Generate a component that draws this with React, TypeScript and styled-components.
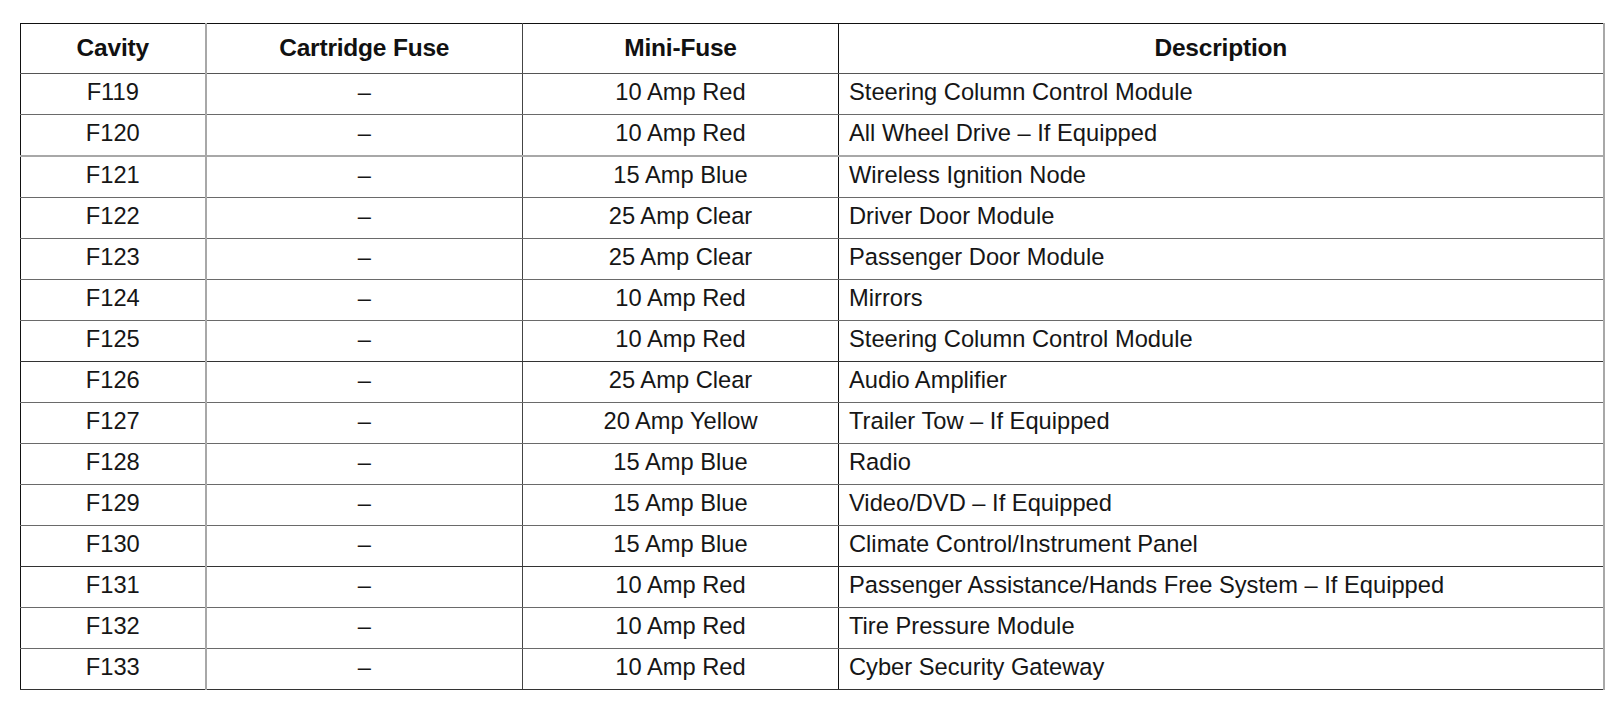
import React from "react";
import styled, { createGlobalStyle } from "styled-components";

const Global = createGlobalStyle`
  html, body { margin: 0; padding: 0; background: #ffffff; }
  body { font-family: "Liberation Sans", Arial, sans-serif; color: #111; }
`;

const Page = styled.div`
  padding: 23px 8px 0 20px;
`;

const Table = styled.table`
  border-collapse: collapse;
  width: 1583px;
  table-layout: fixed;
  border-top: 1px solid #111;
  border-left: 1px solid #111;
  border-bottom: 1px solid #111;
  border-right: 2px solid #a8a8a8;
`;

type Line = "normal" | "light" | "dark";

const lineCss = (l: Line) =>
  l === "light" ? "2px solid #a8a8a8" : l === "dark" ? "1px solid #333" : "1px solid #6a6a6a";

const colRight = ["2px solid #a8a8a8", "1px solid #444", "1px solid #111", "none"];

const HeadCell = styled.th<{ $col: number }>`
  height: 47px;
  padding: 0 0 2px 0;
  font-family: "Liberation Sans", Arial, sans-serif;
  font-weight: 700;
  font-size: 24.5px;
  letter-spacing: -0.2px;
  color: #111;
  text-align: center;
  vertical-align: middle;
  border-bottom: 1px solid #555;
  border-right: ${(p) => colRight[p.$col]};
`;

const Cell = styled.td<{ $col: number; $line: Line }>`
  height: 37px;
  padding: 0 0 3px ${(p) => (p.$col === 3 ? "10px" : "0")};
  font-size: 23.7px;
  font-weight: 400;
  line-height: 1;
  color: #161616;
  text-align: ${(p) => (p.$col === 3 ? "left" : "center")};
  vertical-align: middle;
  white-space: nowrap;
  border-bottom: ${(p) => lineCss(p.$line)};
  border-right: ${(p) => colRight[p.$col]};
`;

type Row = { cavity: string; mini: string; desc: string; line: Line };

const rows: Row[] = [
  { cavity: "F119", mini: "10 Amp Red", desc: "Steering Column Control Module", line: "normal" },
  { cavity: "F120", mini: "10 Amp Red", desc: "All Wheel Drive – If Equipped", line: "light" },
  { cavity: "F121", mini: "15 Amp Blue", desc: "Wireless Ignition Node", line: "normal" },
  { cavity: "F122", mini: "25 Amp Clear", desc: "Driver Door Module", line: "normal" },
  { cavity: "F123", mini: "25 Amp Clear", desc: "Passenger Door Module", line: "normal" },
  { cavity: "F124", mini: "10 Amp Red", desc: "Mirrors", line: "normal" },
  { cavity: "F125", mini: "10 Amp Red", desc: "Steering Column Control Module", line: "dark" },
  { cavity: "F126", mini: "25 Amp Clear", desc: "Audio Amplifier", line: "normal" },
  { cavity: "F127", mini: "20 Amp Yellow", desc: "Trailer Tow – If Equipped", line: "normal" },
  { cavity: "F128", mini: "15 Amp Blue", desc: "Radio", line: "normal" },
  { cavity: "F129", mini: "15 Amp Blue", desc: "Video/DVD – If Equipped", line: "normal" },
  { cavity: "F130", mini: "15 Amp Blue", desc: "Climate Control/Instrument Panel", line: "dark" },
  { cavity: "F131", mini: "10 Amp Red", desc: "Passenger Assistance/Hands Free System – If Equipped", line: "normal" },
  { cavity: "F132", mini: "10 Amp Red", desc: "Tire Pressure Module", line: "normal" },
  { cavity: "F133", mini: "10 Amp Red", desc: "Cyber Security Gateway", line: "dark" },
];

const widths = [185, 317, 316, 765];
const heads = ["Cavity", "Cartridge Fuse", "Mini-Fuse", "Description"];

export default function App() {
  return (
    <>
      <Global />
      <Page>
        <Table>
          <colgroup>
            {widths.map((w, i) => (
              <col key={i} style={{ width: w }} />
            ))}
          </colgroup>
          <thead>
            <tr>
              {heads.map((h, i) => (
                <HeadCell key={h} $col={i}>
                  {h}
                </HeadCell>
              ))}
            </tr>
          </thead>
          <tbody>
            {rows.map((r) => (
              <tr key={r.cavity}>
                <Cell $col={0} $line={r.line}>{r.cavity}</Cell>
                <Cell $col={1} $line={r.line}>–</Cell>
                <Cell $col={2} $line={r.line}>{r.mini}</Cell>
                <Cell $col={3} $line={r.line}>{r.desc}</Cell>
              </tr>
            ))}
          </tbody>
        </Table>
      </Page>
    </>
  );
}
